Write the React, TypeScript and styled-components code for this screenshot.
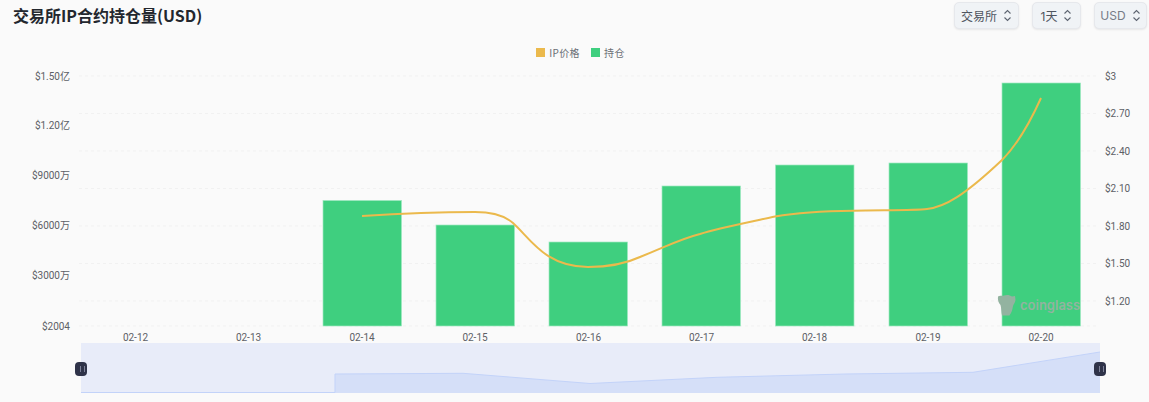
import React from "react";
import styled, { createGlobalStyle } from "styled-components";

const GlobalStyle = createGlobalStyle`
  html, body {
    margin: 0;
    padding: 0;
    background: #fafafa;
  }
  * {
    box-sizing: border-box;
  }
`;

const leftTicks = [
  { y: 76, label: "$1.50亿" },
  { y: 125.5, label: "$1.20亿" },
  { y: 175.5, label: "$9000万" },
  { y: 225.5, label: "$6000万" },
  { y: 275.5, label: "$3000万" },
  { y: 326, label: "$2004" },
];

const rightTicks = [
  { y: 76, label: "$3" },
  { y: 113.5, label: "$2.70" },
  { y: 151, label: "$2.40" },
  { y: 188.5, label: "$2.10" },
  { y: 226, label: "$1.80" },
  { y: 263.5, label: "$1.50" },
  { y: 301, label: "$1.20" },
];

const days = [
  { x: 135.5, label: "02-12" },
  { x: 248.5, label: "02-13" },
  { x: 362, label: "02-14" },
  { x: 475, label: "02-15" },
  { x: 588.5, label: "02-16" },
  { x: 701.5, label: "02-17" },
  { x: 814.5, label: "02-18" },
  { x: 928, label: "02-19" },
  { x: 1041, label: "02-20" },
];

const bars = [
  { x: 323, top: 200.5 },
  { x: 436, top: 225 },
  { x: 549, top: 242 },
  { x: 662, top: 186 },
  { x: 775.5, top: 165 },
  { x: 889, top: 163 },
  { x: 1002, top: 83 },
];

const PRICE_PATH =
  "M362 216 C385 214.5 430 212 475 212 C490 212 504 215 513 223 C530 238 545 267 588 267 C610 267 625 264 640 257 C665 247 680 239 700 234 C715 229 740 224 775 216.5 C795 213 825 211 853 210.7 C880 210 915 210.5 927 209 C945 207 965 195 1002 160 C1020 142 1032 118 1041 98";

const MINIMAP_LINE =
  "M0 49.5 H254 V31 L382 30.3 L509 40.5 L636 34.3 L764 31 L892 29.3 L1019 9";

const Select: React.FC<{ label: string; width: number; $muted?: boolean }> = ({ label, width, $muted }) => (
  <SelectButton $width={width} $muted={$muted}>
    {label}
    <svg width="9" height="13" viewBox="0 0 9 13" fill="none" stroke="#5d6470" strokeWidth="1.1">
      <path d="M1.5 4.5 L4.5 1.5 L7.5 4.5" />
      <path d="M1.5 8.5 L4.5 11.5 L7.5 8.5" />
    </svg>
  </SelectButton>
);

const Chart: React.FC = () => (
  <ChartSvg width="1149" height="292" viewBox="0 52 1149 292">
    {[76, 113.5, 151, 188.5, 226, 263.5, 301, 326].map((y) => (
      <line key={y} x1="79" x2="1098" y1={y} y2={y} stroke="#f1f1f1" strokeDasharray="3 3" />
    ))}
    {bars.map((b) => (
      <rect
        key={b.x}
        x={b.x}
        y={b.top}
        width="78.5"
        height={326 - b.top}
        fill="#3fcf7f"
        stroke="#9fe8c0"
        strokeWidth="0.7"
      />
    ))}
    <path d={PRICE_PATH} fill="none" stroke="#ebb94c" strokeWidth="2" />
    {leftTicks.map((t) => (
      <AxisText key={t.label} x="70" y={t.y + 3.5} textAnchor="end">
        {t.label}
      </AxisText>
    ))}
    {rightTicks.map((t) => (
      <AxisText key={t.label} x="1105" y={t.y + 3.5}>
        {t.label}
      </AxisText>
    ))}
    {days.map((d) => (
      <AxisText key={d.label} x={d.x} y="341" textAnchor="middle">
        {d.label}
      </AxisText>
    ))}
    <g fill="#93b3a0">
      <path d="M998 296.5 C1000 295 1002 296.5 1004 295.5 C1007 294.5 1010 295 1012 296.5 L1015 296 L1015.5 300 C1015 303 1013.5 304 1013 306 C1012.500 309 1012 311 1011 313 L1009.5 315.5 L1002 315.5 C1001 312 1001.5 308 1000.5 305 C998.5 303 997.5 299.5 998 296.5 Z" />
      <WatermarkText x="1020" y="309.5">
        coinglass
      </WatermarkText>
    </g>
  </ChartSvg>
);

const App: React.FC = () => (
  <>
    <GlobalStyle />
    <Page>
      <Header>
        <Title>交易所IP合约持仓量(USD)</Title>
        <Controls>
          <Select label="交易所" width={65} />
          <Select label="1天" width={49} />
          <Select label="USD" width={53} $muted />
        </Controls>
      </Header>
      <Legend>
        <LegendItem>
          <Swatch $color="#ebb94c" />
          IP价格
        </LegendItem>
        <LegendItem>
          <Swatch $color="#3fcf7f" />
          持仓
        </LegendItem>
      </Legend>
      <Chart />
      <Slider>
        <svg width="1019" height="50" viewBox="0 0 1019 50">
          <path d={`${MINIMAP_LINE} V50 H0 Z`} fill="#d5dff8" />
          <path d={MINIMAP_LINE} fill="none" stroke="#c3d3f9" />
        </svg>
        <Handle $side="left" />
        <Handle $side="right" />
      </Slider>
    </Page>
  </>
);

export default App;

const Page = styled.div`
  width: 1149px;
  height: 402px;
  background: #fafafa;
  overflow: hidden;
  font-family: "Noto Sans CJK SC", "Noto Sans", sans-serif;
`;

const Header = styled.header`
  height: 32px;
  padding: 2px 2px 0 13px;
  display: flex;
  justify-content: space-between;
  align-items: flex-start;
`;

const Title = styled.h1`
  margin: 0;
  font-size: 16px;
  line-height: 27px;
  font-weight: 700;
  color: #23272e;
`;

const Controls = styled.div`
  display: flex;
  gap: 13px;
`;

const SelectButton = styled.button<{ $width: number; $muted?: boolean }>`
  width: ${(p) => p.$width}px;
  height: 27px;
  padding: 0;
  display: flex;
  align-items: center;
  justify-content: center;
  gap: 6px;
  background: #f0f3f6;
  border: 1px solid #e6e8ec;
  border-radius: 5px;
  box-shadow: 0 1px 2px rgba(0, 0, 0, 0.08);
  font-family: Inter, "Noto Sans CJK SC", sans-serif;
  font-size: 12px;
  color: ${(p) => (p.$muted ? "#767c86" : "#4f5560")};
`;

const Legend = styled.div`
  height: 20px;
  margin-top: 10px;
  display: flex;
  justify-content: center;
  align-items: center;
  gap: 11px;
  padding-left: 12px;
`;

const LegendItem = styled.div`
  display: flex;
  align-items: center;
  gap: 4px;
  font-size: 10px;
  letter-spacing: 0.4px;
  color: #6b6f76;
`;

const Swatch = styled.span<{ $color: string }>`
  width: 9px;
  height: 9px;
  background: ${(p) => p.$color};
`;

const ChartSvg = styled.svg`
  display: block;
  margin-top: -10px;
`;

const AxisText = styled.text`
  font-family: Roboto, "Noto Sans CJK SC", sans-serif;
  font-size: 10px;
  fill: #5c6066;
`;

const WatermarkText = styled.text`
  font-family: Inter, sans-serif;
  font-size: 13px;
  font-weight: 600;
`;

const Slider = styled.div`
  position: relative;
  width: 1019px;
  height: 50px;
  margin: -1px 0 0 81px;
  background: #e8ecf9;

  svg {
    display: block;
  }
`;

const Handle = styled.span<{ $side: "left" | "right" }>`
  position: absolute;
  top: 19px;
  ${(p) => p.$side}: -6px;
  width: 12px;
  height: 14px;
  border-radius: 4px;
  background: #2f3349;

  &::before {
    content: "";
    position: absolute;
    left: 4.5px;
    top: 4px;
    width: 3px;
    height: 6px;
    border-left: 1px solid #7d8198;
    border-right: 1px solid #7d8198;
  }
`;
